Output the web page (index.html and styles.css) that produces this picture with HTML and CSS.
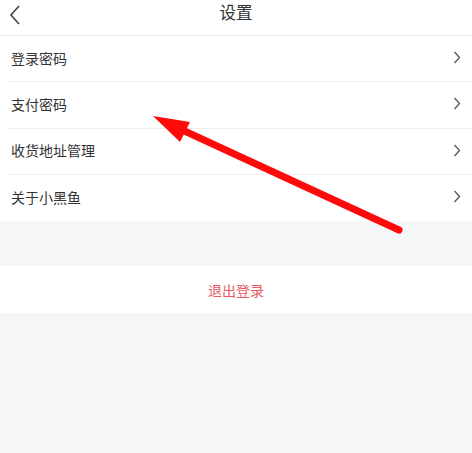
FILE: index.html
```html
<!DOCTYPE html>
<html lang="zh">
<head>
<meta charset="utf-8">
<link rel="stylesheet" href="styles.css">
</head>
<body>
<div class="page">
  <header class="topbar">
    <svg class="back" width="12" height="20" viewBox="0 0 12 20"><path d="M10 1 L2 10 L10 19" fill="none" stroke="#444" stroke-width="1.6"/></svg>
    <div class="title">设置</div>
  </header>
  <ul class="list">
    <li class="row"><span>登录密码</span><svg class="chev" width="8" height="13" viewBox="0 0 8 13"><path d="M1.5 1 L6.5 6.5 L1.5 12" fill="none" stroke="#555" stroke-width="1.3"/></svg></li>
    <li class="row"><span>支付密码</span><svg class="chev" width="8" height="13" viewBox="0 0 8 13"><path d="M1.5 1 L6.5 6.5 L1.5 12" fill="none" stroke="#555" stroke-width="1.3"/></svg></li>
    <li class="row"><span>收货地址管理</span><svg class="chev" width="8" height="13" viewBox="0 0 8 13"><path d="M1.5 1 L6.5 6.5 L1.5 12" fill="none" stroke="#555" stroke-width="1.3"/></svg></li>
    <li class="row"><span>关于小黑鱼</span><svg class="chev" width="8" height="13" viewBox="0 0 8 13"><path d="M1.5 1 L6.5 6.5 L1.5 12" fill="none" stroke="#555" stroke-width="1.3"/></svg></li>
  </ul>
  <div class="logout">退出登录</div>
  <svg class="arrow" width="472" height="453" viewBox="0 0 472 453">
    <line x1="399" y1="230" x2="178" y2="128" stroke="#ff0a0a" stroke-width="7" stroke-linecap="round"/>
    <polygon points="153,116 190,122 180,142" fill="#ff0a0a"/>
  </svg>
</div>
</body>
</html>
```
FILE: styles.css
```css
html, body {
  margin: 0;
  padding: 0;
  background: #f5f6f8;
}
body {
  font-family: "Noto Sans CJK SC", "Noto Sans", sans-serif;
  width: 472px;
  height: 453px;
  overflow: hidden;
}
.page {
  position: relative;
  width: 472px;
  height: 453px;
}
.topbar {
  position: relative;
  box-sizing: border-box;
  height: 36px;
  background: #fff;
  border-bottom: 1px solid #ececec;
  display: flex;
  align-items: flex-start;
  justify-content: center;
  padding-top: 4px;
}
.back {
  position: absolute;
  left: 9px;
  top: 5px;
}
.title {
  font-size: 16.5px;
  color: #333;
  line-height: 1;
}
.list {
  list-style: none;
  margin: 0;
  padding: 0 0 0 8px;
  background: #fff;
}
.row {
  box-sizing: border-box;
  height: 46.25px;
  display: flex;
  align-items: center;
  justify-content: space-between;
  padding: 0 11px 2px 3px;
  border-bottom: 1px solid #eeeeee;
  font-size: 14px;
  line-height: 1;
  color: #333;
}
.row:last-child {
  border-bottom: none;
}
.chev {
  display: block;
}
.logout {
  margin-top: 45px;
  height: 47px;
  background: #fff;
  display: flex;
  align-items: center;
  justify-content: center;
  font-size: 14px;
  line-height: 1;
  color: #e85a5f;
}
.arrow {
  position: absolute;
  left: 0;
  top: 0;
  pointer-events: none;
}
```
